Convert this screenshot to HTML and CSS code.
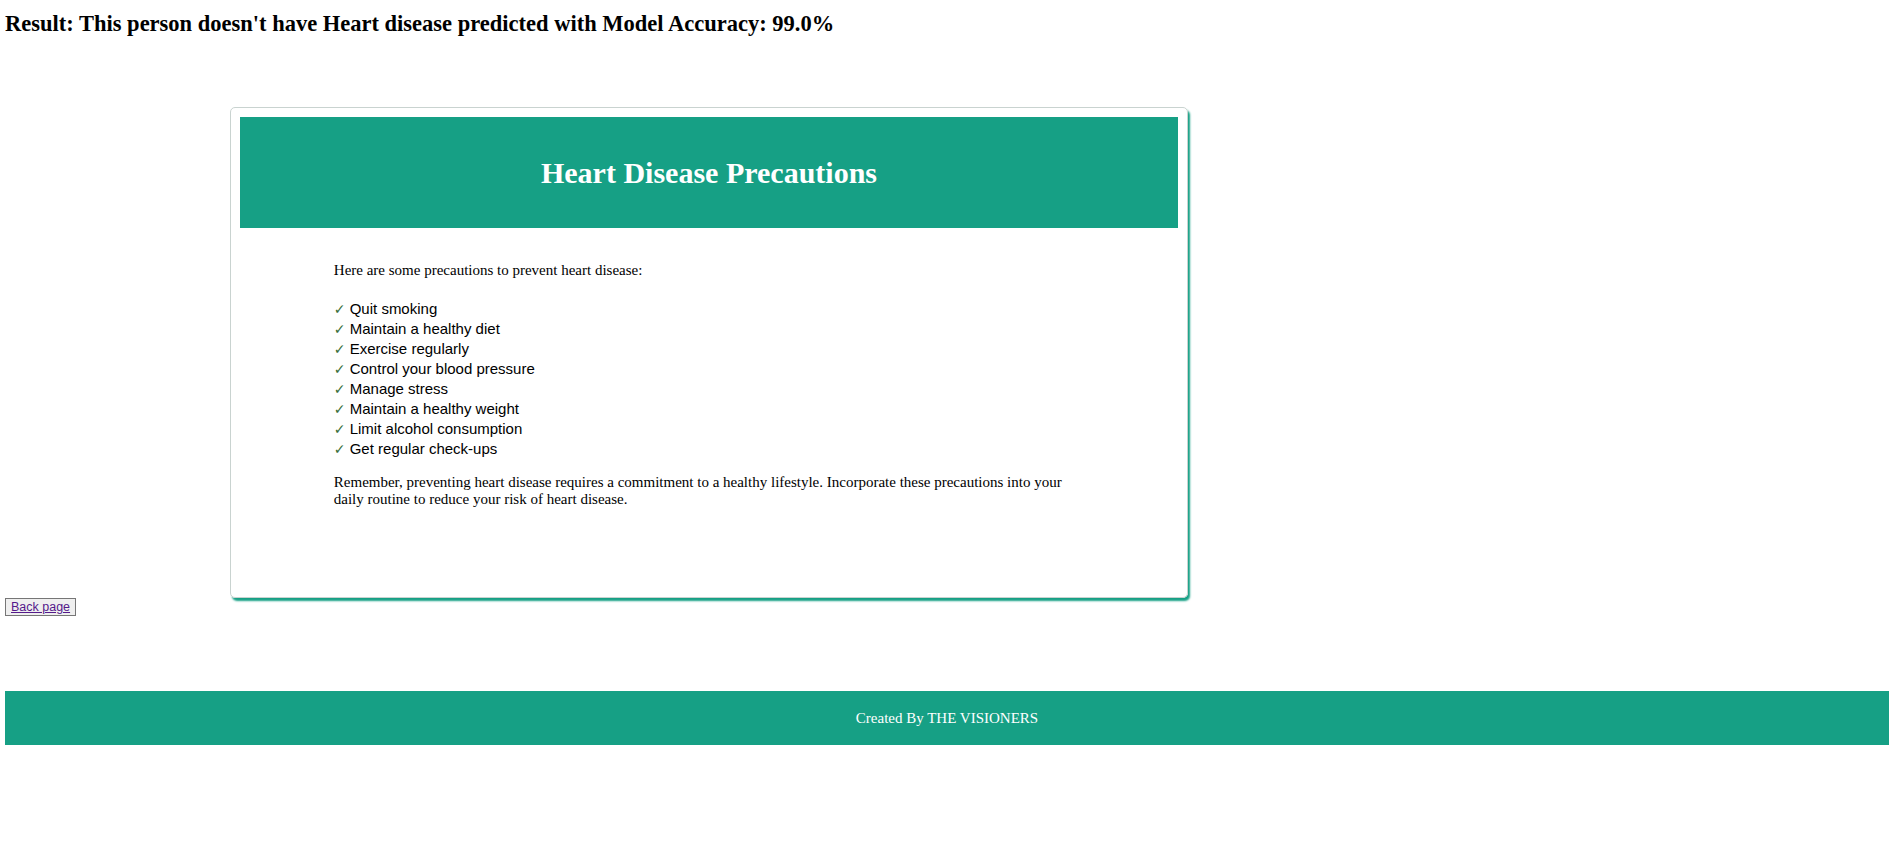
FILE: index.html
```html
<!DOCTYPE html>
<html lang="en">
<head>
<meta charset="utf-8">
<title>Result</title>
<link rel="stylesheet" href="styles.css">
</head>
<body>
<h2 class="result">Result: This person doesn't have Heart disease predicted with Model Accuracy: 99.0%</h2>
<div class="card">
  <div class="card-header"><h1 class="card-title">Heart Disease Precautions</h1></div>
  <div class="card-body">
    <p class="intro">Here are some precautions to prevent heart disease:</p>
    <ul class="checks">
      <li><span class="tick">✓</span> Quit smoking</li>
      <li><span class="tick">✓</span> Maintain a healthy diet</li>
      <li><span class="tick">✓</span> Exercise regularly</li>
      <li><span class="tick">✓</span> Control your blood pressure</li>
      <li><span class="tick">✓</span> Manage stress</li>
      <li><span class="tick">✓</span> Maintain a healthy weight</li>
      <li><span class="tick">✓</span> Limit alcohol consumption</li>
      <li><span class="tick">✓</span> Get regular check-ups</li>
    </ul>
    <p class="outro">Remember, preventing heart disease requires a commitment to a healthy lifestyle. Incorporate these precautions into your daily routine to reduce your risk of heart disease.</p>
  </div>
</div>
<button class="back" type="button"><a class="back-link" href="#">Back page</a></button>
<footer class="footer"><p class="footer-text">Created By THE VISIONERS</p></footer>
</body>
</html>
```
FILE: styles.css
```css
html, body {
  background: #ffffff;
}
body {
  margin: 5px;
  font-family: "Liberation Serif", "Times New Roman", serif;
  font-size: 15px;
  color: #000;
}
.result {
  font-size: 22.5px;
  font-weight: bold;
  margin: 0;
  padding-top: 6px;
  line-height: 26px;
}
.card {
  width: 938px;
  margin: 70px 0 0 225px;
  padding: 9px;
  border: 1px solid #c9d3d0;
  border-radius: 5px;
  box-shadow: 2px 3px 2px #16a085;
  height: 471px;
}
.card-header {
  background: #16a085;
  height: 111px;
  display: flex;
  align-items: center;
  justify-content: center;
}
.card-title {
  margin: 0;
  color: #ffffff;
  font-size: 30px;
  font-weight: bold;
}
.card-body {
  width: 80%;
  margin: 0 auto;
  padding-top: 34px;
}
.intro {
  margin: 0;
  line-height: 17px;
}
.checks {
  list-style: none;
  margin: 20px 0 0 0;
  padding: 0;
  font-family: "Liberation Sans", Arial, sans-serif;
  font-size: 15px;
  line-height: 20px;
}
.checks li {
  height: 20px;
}
.tick {
  color: #3a6e3a;
  font-family: "DejaVu Sans", sans-serif;
  font-size: 14px;
  line-height: 0;
}
.outro {
  margin: 15px 0 0 0;
  line-height: 17px;
}
.back {
  display: block;
  margin: 0;
  padding: 1px 5px;
  font-family: "Liberation Sans", Arial, sans-serif;
  font-size: 12.5px;
  background: #efefef;
  border: 1px solid #767676;
  border-radius: 0;
  height: 18px;
  line-height: 14px;
}
.back-link {
  color: #551a8b;
  text-decoration: underline;
}
.footer {
  margin-top: 75px;
  background: #16a085;
  height: 54px;
  display: flex;
  align-items: center;
  justify-content: center;
}
.footer-text {
  margin: 0;
  color: #ffffff;
  font-size: 15px;
}
```
